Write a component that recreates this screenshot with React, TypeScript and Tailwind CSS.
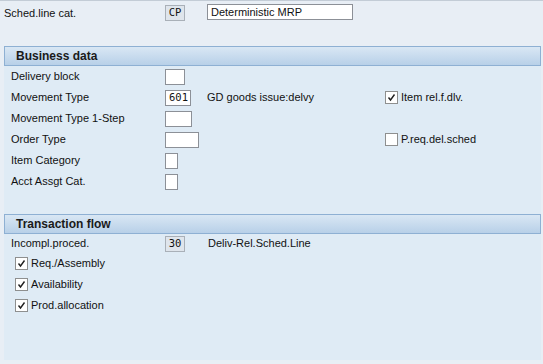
import React from 'react';

const Check = ({ checked }: { checked: boolean }) => (
  <span className="w-[13px] h-[13px] border border-[#8e8f8f] bg-white flex items-center justify-center shrink-0">
    {checked && (
      <svg width="9" height="9" viewBox="0 0 9 9">
        <path d="M1.5 4.5 L3.5 7 L7.5 1.5" fill="none" stroke="#1f1f1f" strokeWidth="1.4" />
      </svg>
    )}
  </span>
);

const Input = ({ w, value }: { w: string; value?: string }) => (
  <span className={`${w} h-[16px] border border-[#8c9097] bg-white flex items-center px-[3px] text-[10.5px] font-['DejaVu_Sans_Mono',monospace] text-[#111]`}>
    {value}
  </span>
);

const Display = ({ value }: { value: string }) => (
  <span className="w-[20px] h-[16px] border border-[#a9b0b8] bg-[#dfe5ec] flex items-center justify-center text-[10.5px] font-['DejaVu_Sans_Mono',monospace] text-[#111]">
    {value}
  </span>
);

const businessRows = [
  { label: 'Delivery block', input: 'w-[20px]' },
  { label: 'Movement Type', input: 'w-[26px]', value: '601', desc: 'GD goods issue:delvy', check: { label: 'Item rel.f.dlv.', checked: true } },
  { label: 'Movement Type 1-Step', input: 'w-[27px]' },
  { label: 'Order Type', input: 'w-[34px]', check: { label: 'P.req.del.sched', checked: false } },
  { label: 'Item Category', input: 'w-[13px]' },
  { label: 'Acct Assgt Cat.', input: 'w-[13px]' },
];

const flowChecks = ['Req./Assembly', 'Availability', 'Prod.allocation'];

const Header = ({ title }: { title: string }) => (
  <div className="h-[20px] border border-[#8eb0d3] bg-gradient-to-b from-[#d9e7f4] to-[#b8d0e8] flex items-center pl-[11px] text-[12px] font-bold text-[#1a1a1a]">
    {title}
  </div>
);

export default function App() {
  return (
    <div className="w-[543px] h-[364px] bg-[#e8eef5] border-t border-[#c3ccd6] font-['Liberation_Sans',Arial,sans-serif] text-[11px] text-[#111] flex flex-col">
      <div className="h-[24px] flex items-center pl-[4px]">
        <span className="w-[161px]">Sched.line cat.</span>
        <Display value="CP" />
        <span className="ml-[22px] w-[146px] h-[16px] border border-[#8c9097] bg-white flex items-center px-[3px] -mt-[2px]">
          Deterministic MRP
        </span>
      </div>
      <div className="mt-[21px] ml-[4px] mr-[2px] h-[314px] bg-[#dfebf5] flex flex-col">
        <Header title="Business data" />
        <div className="flex flex-col">
          {businessRows.map(r => (
            <div key={r.label} className="h-[21px] flex items-center pl-[7px]">
              <span className="w-[154px]">{r.label}</span>
              <Input w={r.input} value={r.value} />
              {r.desc && <span className="absolute left-[207px]">{r.desc}</span>}
              {r.check && (
                <span className="absolute left-[385px] flex items-center gap-[3px]">
                  <Check checked={r.check.checked} />
                  {r.check.label}
                </span>
              )}
            </div>
          ))}
        </div>
        <div className="h-[22px]" />
        <Header title="Transaction flow" />
        <div className="h-[19px] flex items-center pl-[7px]">
          <span className="w-[154px]">Incompl.proced.</span>
          <Display value="30" />
          <span className="ml-[23px]">Deliv-Rel.Sched.Line</span>
        </div>
        {flowChecks.map(c => (
          <div key={c} className="h-[21px] flex items-center pl-[11px] gap-[3px]">
            <Check checked />
            {c}
          </div>
        ))}
      </div>
    </div>
  );
}
